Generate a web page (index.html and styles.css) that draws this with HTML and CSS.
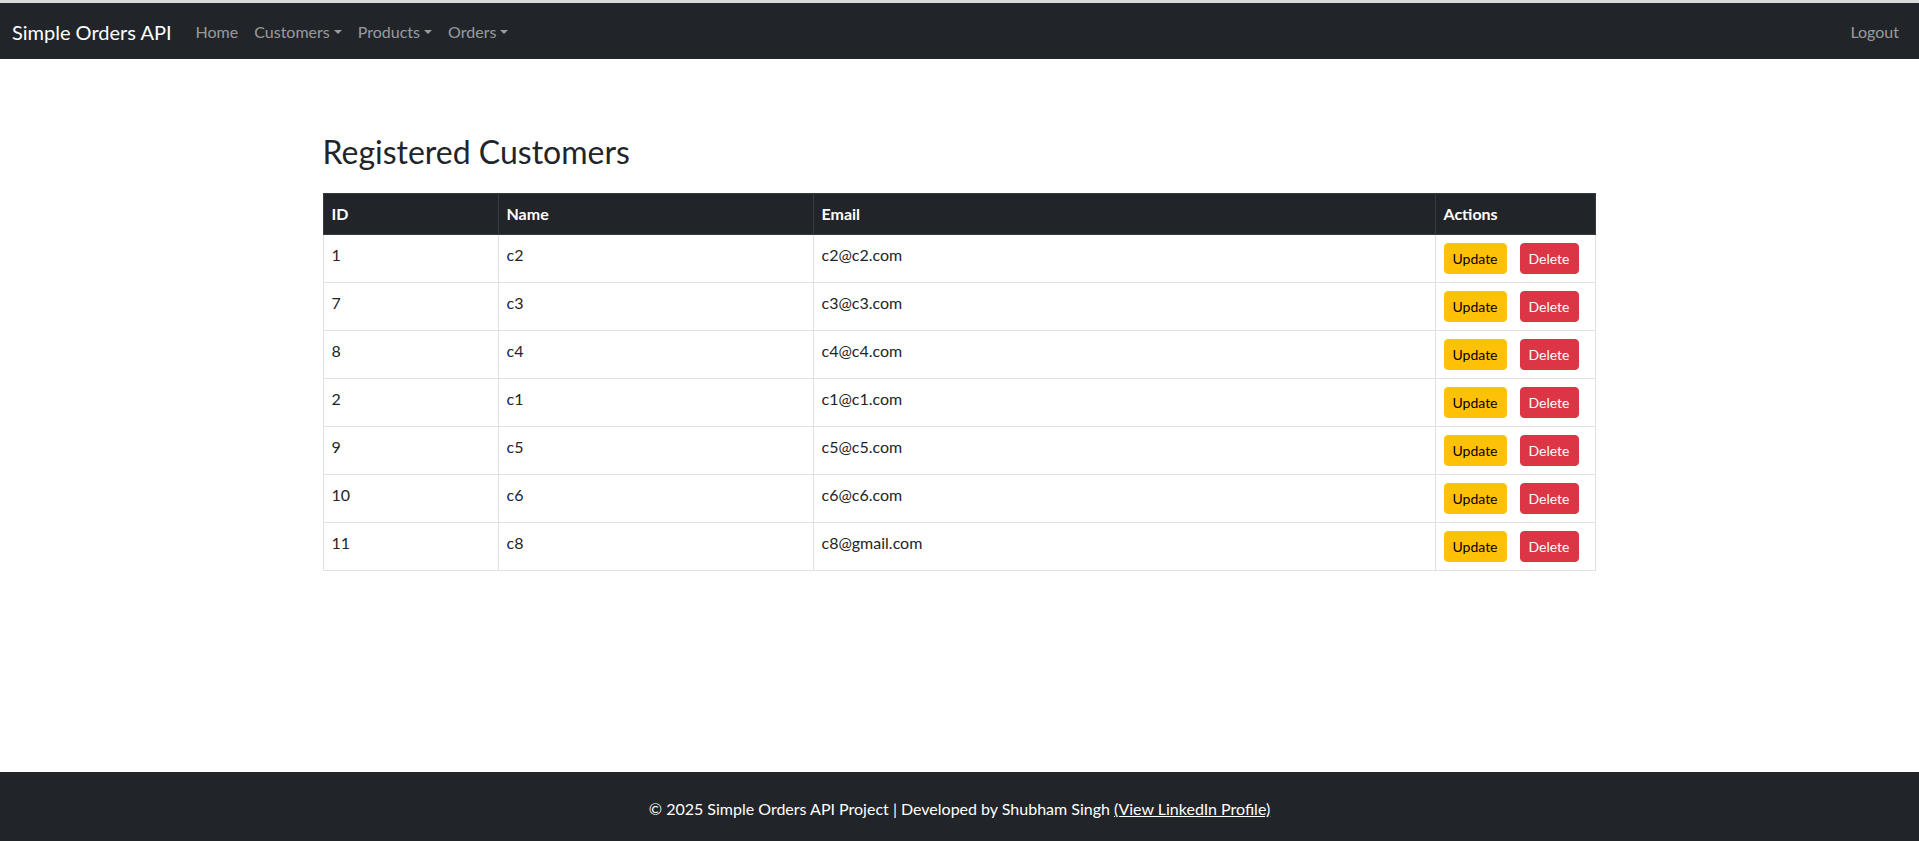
FILE: index.html
```html
<!DOCTYPE html>
<html lang="en">
<head>
<meta charset="utf-8">
<title>Simple Orders API</title>
<link rel="stylesheet" href="styles.css">
</head>
<body>
<div class="page">
  <nav class="navbar">
    <div class="nav-left">
      <a class="brand" href="#">Simple Orders API</a>
      <ul class="nav-links">
        <li><a class="nav-link" href="#">Home</a></li>
        <li><a class="nav-link dropdown" href="#">Customers</a></li>
        <li><a class="nav-link dropdown" href="#">Products</a></li>
        <li><a class="nav-link dropdown" href="#">Orders</a></li>
      </ul>
    </div>
    <a class="nav-link" href="#">Logout</a>
  </nav>

  <main class="content">
    <div class="container">
      <h2 class="title">Registered Customers</h2>
      <table class="table">
        <colgroup>
          <col class="col-id">
          <col class="col-name">
          <col class="col-email">
          <col class="col-actions">
        </colgroup>
        <thead>
          <tr><th>ID</th><th>Name</th><th>Email</th><th>Actions</th></tr>
        </thead>
        <tbody>
          <tr><td>1</td><td>c2</td><td>c2@c2.com</td><td class="actions"><button class="btn btn-warning">Update</button><button class="btn btn-danger">Delete</button></td></tr>
          <tr><td>7</td><td>c3</td><td>c3@c3.com</td><td class="actions"><button class="btn btn-warning">Update</button><button class="btn btn-danger">Delete</button></td></tr>
          <tr><td>8</td><td>c4</td><td>c4@c4.com</td><td class="actions"><button class="btn btn-warning">Update</button><button class="btn btn-danger">Delete</button></td></tr>
          <tr><td>2</td><td>c1</td><td>c1@c1.com</td><td class="actions"><button class="btn btn-warning">Update</button><button class="btn btn-danger">Delete</button></td></tr>
          <tr><td>9</td><td>c5</td><td>c5@c5.com</td><td class="actions"><button class="btn btn-warning">Update</button><button class="btn btn-danger">Delete</button></td></tr>
          <tr><td>10</td><td>c6</td><td>c6@c6.com</td><td class="actions"><button class="btn btn-warning">Update</button><button class="btn btn-danger">Delete</button></td></tr>
          <tr><td>11</td><td>c8</td><td>c8@gmail.com</td><td class="actions"><button class="btn btn-warning">Update</button><button class="btn btn-danger">Delete</button></td></tr>
        </tbody>
      </table>
    </div>
  </main>

  <footer class="footer">
    <p>&copy; 2025 Simple Orders API Project | Developed by Shubham Singh <a href="#">(View LinkedIn Profile)</a></p>
  </footer>
</div>
</body>
</html>
```

FILE: styles.css
```css
* { box-sizing: border-box; }

html, body {
  margin: 0;
  padding: 0;
}

body {
  font-family: "Lato", "Segoe UI", "Liberation Sans", sans-serif;
  font-size: 16px;
  line-height: 1.5;
  color: #212529;
  background: #fff;
  border-top: 3px solid #d9d9d9;
}

.page {
  display: flex;
  flex-direction: column;
  min-height: 838px;
}

a { text-decoration: none; }

.navbar {
  background: #212529;
  height: 56px;
  display: flex;
  align-items: center;
  justify-content: space-between;
  padding: 9px 12px 7px;
}

.nav-left {
  display: flex;
  align-items: center;
}

.brand {
  color: #fff;
  font-size: 20px;
  line-height: 30px;
  padding: 5px 0;
  margin-right: 16px;
}

.nav-links {
  display: flex;
  list-style: none;
  margin: 0;
  padding: 0;
}

.nav-link {
  display: block;
  color: rgba(255, 255, 255, 0.55);
  padding: 8px;
  line-height: 24px;
}

.dropdown::after {
  content: "";
  display: inline-block;
  margin-left: 0.255em;
  vertical-align: 0.255em;
  border-top: 0.3em solid;
  border-right: 0.3em solid transparent;
  border-left: 0.3em solid transparent;
  border-bottom: 0;
}

.content {
  flex: 1;
}

.container {
  width: 1274px;
  margin: 0 auto;
  padding-top: 74px;
}

.title {
  font-size: 32px;
  font-weight: 400;
  line-height: 1.2;
  margin: 0 0 22px;
}

.table {
  width: 1272px;
  border-collapse: collapse;
  table-layout: fixed;
}

.col-id { width: 175px; }
.col-name { width: 315px; }
.col-email { width: 622px; }
.col-actions { width: 160px; }

.table th,
.table td {
  border: 1px solid #dee2e6;
  padding: 8px;
  text-align: left;
  vertical-align: top;
  line-height: 24px;
}

.table thead th {
  background: #212529;
  color: #fff;
  font-weight: 700;
  border-color: #373b3e;
}

.actions {
  white-space: nowrap;
}

.btn {
  font-family: inherit;
  font-size: 14px;
  line-height: 21px;
  padding: 4px 8px;
  border: 1px solid transparent;
  border-radius: 4px;
  height: 31px;
  cursor: pointer;
  vertical-align: top;
}

.btn-warning {
  background: #ffc107;
  border-color: #ffc107;
  color: #000;
  margin-right: 13px;
}

.btn-danger {
  background: #dc3545;
  border-color: #dc3545;
  color: #fff;
}

.footer {
  background: #212529;
  color: #fff;
  height: 69px;
  display: flex;
  align-items: center;
  justify-content: center;
  padding-top: 4px;
}

.footer p {
  margin: 0;
  line-height: 24px;
}

.footer a {
  color: #fff;
  text-decoration: underline;
}
```
